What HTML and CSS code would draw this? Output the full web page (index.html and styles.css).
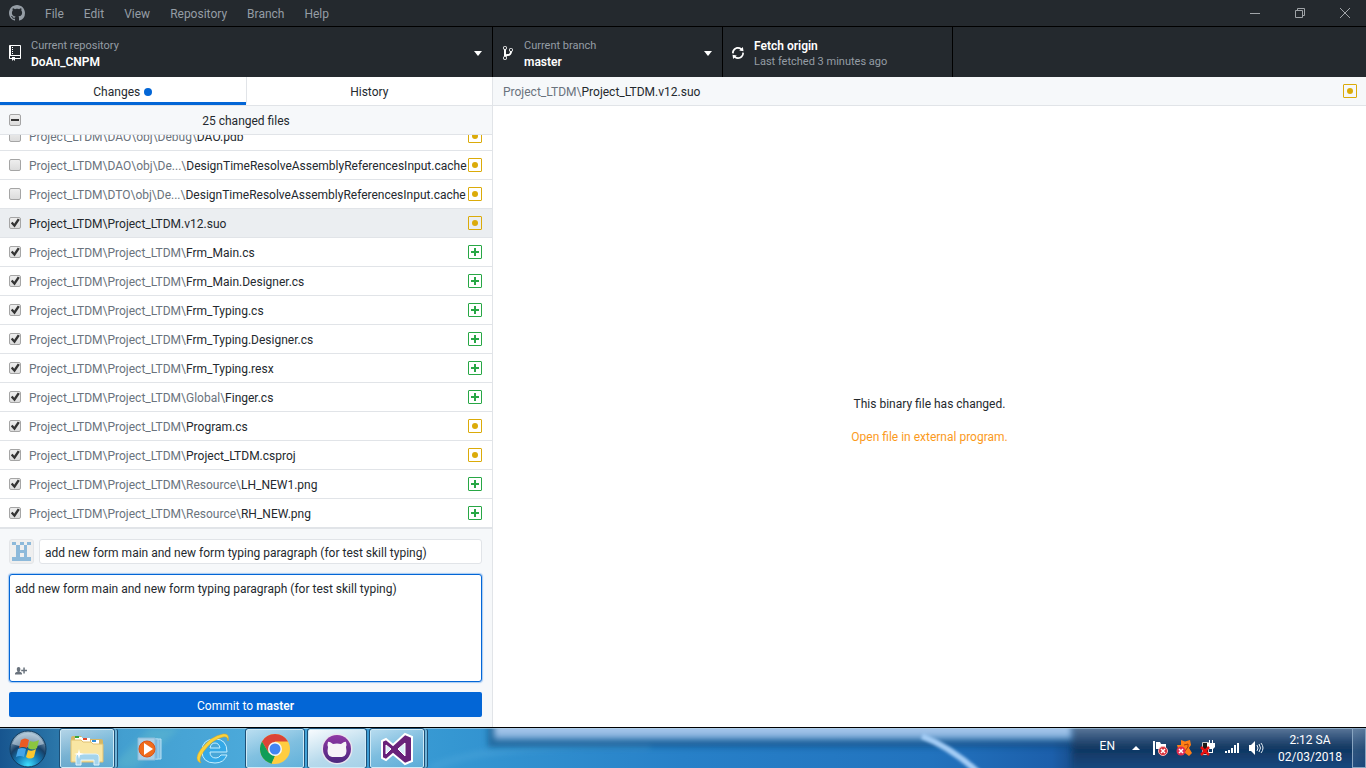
FILE: index.html
```
<!DOCTYPE html>
<html lang="en">
<head>
<meta charset="utf-8">
<title>GitHub Desktop</title>
<link rel="stylesheet" href="styles.css">
</head>
<body>
<svg class="sprite" aria-hidden="true">
  <symbol id="modified" viewBox="0 0 14 14"><rect x=".5" y=".5" width="13" height="13" rx=".5" fill="none" stroke="currentColor"/><circle cx="7" cy="7" r="3" fill="currentColor"/></symbol>
  <symbol id="added" viewBox="0 0 14 14"><rect x=".5" y=".5" width="13" height="13" rx=".5" fill="none" stroke="currentColor"/><path d="M3 6h3V3h2v3h3v2H8v3H6V8H3z" fill="currentColor"/></symbol>
</svg>

<div class="desktop">
  <header class="titlebar">
    <svg class="logo" viewBox="0 0 16 16" aria-hidden="true"><path fill="currentColor" d="M8 0C3.58 0 0 3.58 0 8c0 3.54 2.29 6.53 5.47 7.59.4.07.55-.17.55-.38 0-.19-.01-.82-.01-1.49-2.01.37-2.53-.49-2.69-.94-.09-.23-.48-.94-.82-1.13-.28-.15-.68-.52-.01-.53.63-.01 1.08.58 1.23.82.72 1.21 1.87.87 2.33.66.07-.52.28-.87.51-1.07-1.78-.2-3.64-.89-3.64-3.95 0-.87.31-1.59.82-2.15-.08-.2-.36-1.02.08-2.12 0 0 .67-.21 2.2.82.64-.18 1.32-.27 2-.27.68 0 1.36.09 2 .27 1.53-1.04 2.2-.82 2.2-.82.44 1.1.16 1.92.08 2.12.51.56.82 1.27.82 2.15 0 3.07-1.87 3.75-3.65 3.95.29.25.54.73.54 1.48 0 1.07-.01 1.93-.01 2.2 0 .21.15.46.55.38A8.013 8.013 0 0 0 16 8c0-4.42-3.58-8-8-8z"/></svg>
    <nav class="menu">
      <button>File</button><button>Edit</button><button>View</button><button>Repository</button><button>Branch</button><button>Help</button>
    </nav>
    <div class="window-controls">
      <button aria-label="Minimize"><svg viewBox="0 0 10 10"><path d="M0 5.5h10"/></svg></button>
      <button aria-label="Restore"><svg viewBox="0 0 10 10"><path d="M.5 2.5h7v7h-7zM2.5 2.5v-2h7v7h-2"/></svg></button>
      <button aria-label="Close"><svg viewBox="0 0 10 10"><path d="M0 0l10 10M10 0L0 10"/></svg></button>
    </div>
  </header>

  <div class="toolbar">
    <button class="tool tool-repo">
      <svg class="tool-icon" viewBox="0 0 12 16" aria-hidden="true"><path fill="currentColor" d="M4 9H3V8h1v1zm0-3H3v1h1V6zm0-2H3v1h1V4zm0-2H3v1h1V2zm8-1v12c0 .55-.45 1-1 1H6v2l-1.5-1.5L3 16v-2H1c-.55 0-1-.45-1-1V1c0-.55.45-1 1-1h10c.55 0 1 .45 1 1zm-1 10H1v2h2v-1h3v1h5v-2zm0-10H2v9h9V1z"/></svg>
      <span class="tool-text"><span class="tool-sub">Current repository</span><strong>DoAn_CNPM</strong></span>
      <span class="caret"></span>
    </button>
    <button class="tool">
      <svg class="tool-icon" viewBox="0 0 10 16" aria-hidden="true"><path fill="currentColor" d="M10 5c0-1.11-.89-2-2-2a1.993 1.993 0 0 0-1 3.72v.3c-.02.52-.23.98-.63 1.38-.4.4-.86.61-1.38.63-.83.02-1.48.16-2 .45V4.72a1.993 1.993 0 0 0-1-3.72C.88 1 0 1.89 0 3a2 2 0 0 0 1 1.72v6.56c-.59.35-1 .99-1 1.72 0 1.11.89 2 2 2 1.11 0 2-.89 2-2 0-.53-.2-1-.53-1.36.09-.06.48-.41.59-.47.25-.11.56-.17.94-.17 1.05-.05 1.95-.45 2.75-1.25S8.95 7.77 9 6.73h-.02C9.59 6.37 10 5.73 10 5zM2 1.8c.66 0 1.2.55 1.2 1.2 0 .65-.55 1.2-1.2 1.2C1.35 4.2.8 3.65.8 3c0-.65.55-1.2 1.2-1.2zm0 12.41c-.66 0-1.2-.55-1.2-1.2 0-.65.55-1.2 1.2-1.2.65 0 1.2.55 1.2 1.2 0 .65-.55 1.2-1.2 1.2zm6-8c-.66 0-1.2-.55-1.2-1.2 0-.65.55-1.2 1.2-1.2.65 0 1.2.55 1.2 1.2 0 .65-.55 1.2-1.2 1.2z"/></svg>
      <span class="tool-text"><span class="tool-sub">Current branch</span><strong>master</strong></span>
      <span class="caret"></span>
    </button>
    <button class="tool">
      <svg class="tool-icon" viewBox="0 0 12 16" aria-hidden="true"><path fill="currentColor" d="M10.24 7.4a4.15 4.15 0 0 1-1.2 3.6 4.346 4.346 0 0 1-5.41.54L4.8 10.4.5 9.8l.6 4.2 1.31-1.26c2.36 1.74 5.7 1.57 7.84-.54a5.876 5.876 0 0 0 1.74-4.46l-1.75-.34zM2.96 5a4.346 4.346 0 0 1 5.41-.54L7.2 5.6l4.3.6-.6-4.2-1.31 1.26c-2.36-1.74-5.7-1.57-7.85.54C.5 5.03-.06 6.65.01 8.26l1.75.35A4.17 4.17 0 0 1 2.96 5z"/></svg>
      <span class="tool-text"><strong>Fetch origin</strong><span class="tool-sub">Last fetched 3 minutes ago</span></span>
    </button>
  </div>

  <div class="workspace">
    <aside class="sidebar">
      <div class="tabs" role="tablist">
        <button class="tab tab-active" role="tab" aria-selected="true">Changes<span class="dot"></span></button>
        <button class="tab" role="tab" aria-selected="false">History</button>
      </div>
      <div class="list-header">
        <input type="checkbox" class="check check-mixed" id="all"><label for="all">25 changed files</label>
      </div>
      <ul class="files">
        <li class="file"><input type="checkbox" class="check" id="f1"><label for="f1"><span class="dir">Project_LTDM\DAO\obj\Debug\</span>DAO.pdb</label><svg class="status modified"><use href="#modified"/></svg></li>
        <li class="file"><input type="checkbox" class="check" id="f2"><label for="f2"><span class="dir">Project_LTDM\DAO\obj\De...\</span>DesignTimeResolveAssemblyReferencesInput.cache</label><svg class="status modified"><use href="#modified"/></svg></li>
        <li class="file"><input type="checkbox" class="check" id="f3"><label for="f3"><span class="dir">Project_LTDM\DTO\obj\De...\</span>DesignTimeResolveAssemblyReferencesInput.cache</label><svg class="status modified"><use href="#modified"/></svg></li>
        <li class="file file-selected"><input type="checkbox" class="check" id="f4" checked><label for="f4"><span class="dir">Project_LTDM\</span>Project_LTDM.v12.suo</label><svg class="status modified"><use href="#modified"/></svg></li>
        <li class="file"><input type="checkbox" class="check" id="f5" checked><label for="f5"><span class="dir">Project_LTDM\Project_LTDM\</span>Frm_Main.cs</label><svg class="status added"><use href="#added"/></svg></li>
        <li class="file"><input type="checkbox" class="check" id="f6" checked><label for="f6"><span class="dir">Project_LTDM\Project_LTDM\</span>Frm_Main.Designer.cs</label><svg class="status added"><use href="#added"/></svg></li>
        <li class="file"><input type="checkbox" class="check" id="f7" checked><label for="f7"><span class="dir">Project_LTDM\Project_LTDM\</span>Frm_Typing.cs</label><svg class="status added"><use href="#added"/></svg></li>
        <li class="file"><input type="checkbox" class="check" id="f8" checked><label for="f8"><span class="dir">Project_LTDM\Project_LTDM\</span>Frm_Typing.Designer.cs</label><svg class="status added"><use href="#added"/></svg></li>
        <li class="file"><input type="checkbox" class="check" id="f9" checked><label for="f9"><span class="dir">Project_LTDM\Project_LTDM\</span>Frm_Typing.resx</label><svg class="status added"><use href="#added"/></svg></li>
        <li class="file"><input type="checkbox" class="check" id="f10" checked><label for="f10"><span class="dir">Project_LTDM\Project_LTDM\Global\</span>Finger.cs</label><svg class="status added"><use href="#added"/></svg></li>
        <li class="file"><input type="checkbox" class="check" id="f11" checked><label for="f11"><span class="dir">Project_LTDM\Project_LTDM\</span>Program.cs</label><svg class="status modified"><use href="#modified"/></svg></li>
        <li class="file"><input type="checkbox" class="check" id="f12" checked><label for="f12"><span class="dir">Project_LTDM\Project_LTDM\</span>Project_LTDM.csproj</label><svg class="status modified"><use href="#modified"/></svg></li>
        <li class="file"><input type="checkbox" class="check" id="f13" checked><label for="f13"><span class="dir">Project_LTDM\Project_LTDM\Resource\</span>LH_NEW1.png</label><svg class="status added"><use href="#added"/></svg></li>
        <li class="file"><input type="checkbox" class="check" id="f14" checked><label for="f14"><span class="dir">Project_LTDM\Project_LTDM\Resource\</span>RH_NEW.png</label><svg class="status added"><use href="#added"/></svg></li>
      </ul>
      <form class="commit">
        <div class="summary-row">
          <svg class="avatar" viewBox="0 0 25 25" aria-hidden="true"><rect x=".5" y=".5" width="24" height="24" rx="2.5" fill="#efefef" stroke="#e3e5e8"/><path fill="#8db9da" fill-rule="evenodd" d="M3 3h4v3H3zM11 3h4v3h-4zM18 3h4v3h-4zM7 6h4v5h4V6h3v12h4v4H3v-4h4zM11 14v4h4v-4z"/></svg>
          <input class="summary" type="text" aria-label="Summary" value="add new form main and new form typing paragraph (for test skill typing)">
        </div>
        <div class="description">
          <textarea aria-label="Description">add new form main and new form typing paragraph (for test skill typing)</textarea>
          <button type="button" class="coauthor" aria-label="Add co-authors"><svg viewBox="0 0 12 8"><path fill="currentColor" d="M1.800 2.200C1.800 .8 2.500 0 3.600 0s1.800.8 1.800 2.200c0 .9-.3 1.600-.8 2v.6C6 5.200 7 5.600 7 6.600V7.500H0v-.9c0-1 1-1.400 2.500-1.800v-.6c-.5-.4-.7-1.100-.7-2zM8.300.6h1.500v2.100H12v1.500H9.800v2.300H8.300V4.200H6.200V2.700h2.100z"/></svg></button>
        </div>
        <button type="button" class="commit-button">Commit to <strong>master</strong></button>
      </form>
    </aside>

    <main class="diff">
      <div class="diff-header"><span class="path"><span class="dir">Project_LTDM\</span>Project_LTDM.v12.suo</span><svg class="status modified"><use href="#modified"/></svg></div>
      <div class="binary">
        <p>This binary file has changed.</p>
        <p><a href="#open">Open file in external program.</a></p>
      </div>
    </main>
  </div>

  <footer class="taskbar">
    <svg class="glass" viewBox="0 0 1366 40" preserveAspectRatio="none" aria-hidden="true">
      <defs>
        <linearGradient id="base"><stop offset="0" stop-color="#17558f"/><stop offset=".04" stop-color="#2a75a8"/><stop offset=".09" stop-color="#439fd0"/><stop offset=".18" stop-color="#4ba9da"/><stop offset=".33" stop-color="#3597d2"/><stop offset=".5" stop-color="#2780c8"/><stop offset=".68" stop-color="#2273be"/><stop offset=".77" stop-color="#1c5fab"/><stop offset=".79" stop-color="#174b86"/><stop offset="1" stop-color="#174775"/></linearGradient>
        <linearGradient id="dark" x2="0" y2="1"><stop offset="0" stop-color="#718ba8"/><stop offset=".25" stop-color="#3d5e85"/><stop offset=".5" stop-color="#0f355f"/><stop offset=".7" stop-color="#143f70"/><stop offset="1" stop-color="#1c5088"/></linearGradient>
        <linearGradient id="glow" x2="0" y2="1"><stop offset="0" stop-color="#a9c8ec"/><stop offset=".65" stop-color="#9fc2e8"/><stop offset="1" stop-color="#5b97cc"/></linearGradient>
        <filter id="soft" x="-5%" y="-80%" width="110%" height="260%"><feGaussianBlur stdDeviation="3"/></filter>
        <filter id="thin" x="-20%" y="-20%" width="140%" height="140%"><feGaussianBlur stdDeviation="1.500"/></filter>
      </defs>
      <rect width="1366" height="40" fill="url(#base)"/>
      <path d="M430 40q60-26 220-22" stroke="#62b4e2" stroke-width="5" fill="none" opacity=".35" filter="url(#soft)"/>
      <path d="M110 40L150 0h30l-45 40z" fill="#7bd0c9" opacity=".25" filter="url(#soft)"/>
      <rect x="488" y="-10" width="620" height="29" fill="#0f4271" opacity=".55" filter="url(#soft)"/>
      <rect x="1072" y="-6" width="304" height="52" fill="url(#dark)" filter="url(#soft)"/>
      <rect x="494" y="-8" width="578" height="20" fill="url(#glow)" filter="url(#soft)"/>
      <path d="M922 8q30 12 58 38" stroke="#a4cdf6" stroke-width="6" fill="none" filter="url(#thin)"/>
      <path d="M0 .5h1366" stroke="#b6d5ea" opacity=".6"/>
    </svg>
    <button class="task start" aria-label="Start"><svg viewBox="0 0 40 40">
      <defs><radialGradient id="orb" cx=".5" cy=".95" r=".95"><stop offset="0" stop-color="#3fe0ff"/><stop offset=".35" stop-color="#1579b5"/><stop offset=".6" stop-color="#173f66"/><stop offset="1" stop-color="#a9c4d6"/></radialGradient></defs>
      <circle cx="20" cy="20" r="18" fill="url(#orb)" stroke="#123a5c"/><path d="M4 15a17 17 0 0 1 32 0q-16 6-32 0z" fill="#d9e8f1" opacity=".5"/>
      <path d="M13 11q4-3 8 0l-2 8q-4-2-8 0z" fill="#ea5a24"/><path d="M22 12q4 2 9-1l-2 8q-4 3-9 0z" fill="#8cc63e"/><path d="M10 20q4-2 8 0l-2 8q-4-2-8 0z" fill="#45a5e8"/><path d="M20 21q4 2 8-1l-2 8q-4 3-8 0z" fill="#fdc82f"/>
    </svg></button>
    <button class="task task-open task-stack" aria-label="File Explorer"><svg viewBox="0 0 34 34">
      <path d="M1 6q0-2 2-2h8l2 3h18q2 0 2 2v20H1z" fill="#d6b764"/><path d="M5 5h7v5H5zM12 6h8v5h-8zM21 8h8v5h-8z" fill="#fff"/><path d="M5 4h4v2H5z" fill="#36a43a"/><path d="M13 6h4v2h-4z" fill="#e24a2c"/><path d="M22 8h4v2h-4z" fill="#338fd6"/><path d="M1 8h10l2 2h8l2 2h10v18H1z" fill="#f9e6a3" stroke="#e0c071"/><path d="M6 33v-8q0-3 3-3h17q3 0 3 3v8h-5v-5H11v5z" fill="#a4d4ec" stroke="#dff3fc"/><path d="M9 17l1 4 4 1-4 1-1 4-1-4-4-1 4-1z" fill="#fff"/>
    </svg></button>
    <button class="task" aria-label="Media Player"><svg viewBox="0 0 34 34"><path d="M13 7h14v20H13z" fill="#84bfe2" stroke="#b9e0f3"/><path d="M10 7h14v20H10z" fill="#79b8df" stroke="#a6d5ee"/><path d="M4 6h17v22H4z" fill="#a9cfe7" stroke="#8abbd9"/><circle cx="13" cy="17" r="8" fill="#f06c1b" stroke="#d9541a"/><path d="M10 11v12l9-6z" fill="#fff"/></svg></button>
    <button class="task" aria-label="Internet Explorer"><svg viewBox="0 0 34 34"><path fill-rule="evenodd" d="M31 20H14q0 6 6 6 3 0 5-3h6q-3 8-12 8Q6 31 6 19 6 7 19 7q12 0 12 13zM14 16h10q-1-5-5-5-4 0-5 5z" fill="#35a9e7" stroke="#c6efff"/><path d="M5 31q-8-3 0-14Q15 4 27 2q7-1 5 7 0-5-5-4Q17 7 8 19q-6 8-3 12z" fill="#fbd33b" stroke="#dfa51d" stroke-width=".5"/></svg></button>
    <button class="task task-open" aria-label="Chrome"><svg viewBox="0 0 34 34"><circle cx="17" cy="17" r="15" fill="#ffcd40"/><path d="M4 9.500A15 15 0 0 1 30 9.500H17L10.500 20.500z" fill="#db4437"/><path d="M4 9.500l6.500 11L17 24l-3 7.700A15 15 0 0 1 4 9.500z" fill="#0f9d58"/><path d="M17 24l-3.500 7.600 3.500.4 6.500-11z" fill="#ffcd40"/><circle cx="17" cy="17" r="7" fill="#f5f7f8"/><circle cx="17" cy="17" r="5.500" fill="#4285f4"/></svg></button>
    <button class="task task-open task-current" aria-label="GitHub Desktop"><svg viewBox="0 0 34 34"><defs><linearGradient id="purple" x2="0" y2="1"><stop offset="0" stop-color="#9038a5"/><stop offset="1" stop-color="#4c287e"/></linearGradient></defs><circle cx="17" cy="17" r="15.500" fill="#e9e4ef"/><circle cx="17" cy="17" r="14" fill="url(#purple)"/><path d="M8 10q1-1 5 2 4-1 8 0 4-3 5-2 1 3 0 5 2 9-4 10H12q-6-1-4-10-1-2 0-5z" fill="#f6f4f8"/></svg></button>
    <button class="task task-open task-stack" aria-label="Visual Studio"><svg viewBox="0 0 34 34"><path d="M2 9l4-2 7 6L25 2l7 3v24l-7 3L13 22l-7 6-4-2z" fill="#68217a" stroke="#fff" stroke-width="2"/><path d="M6 13v9l5-5zM25 11l-7 6 7 7z" fill="#d9eefa" stroke="#fff"/></svg></button>

    <div class="tray">
      <span class="language">EN</span>
      <button aria-label="Show hidden icons"><svg viewBox="0 0 16 16"><path d="M4 10l4-4 4 4z" fill="#fff"/></svg></button>
      <button aria-label="Action Center"><svg viewBox="0 0 16 16"><path d="M1 1h2v14H1z" fill="#fff"/><path d="M4 2h4l1 2h5v6H8L7 9H4z" fill="#fff"/><circle cx="11" cy="11" r="4.500" fill="#d8303a" stroke="#fbb"/><path d="M9 9l4 4m0-4l-4 4" stroke="#fff" stroke-width="1.500"/></svg></button>
      <button aria-label="Antivirus"><svg viewBox="0 0 16 16"><path d="M5 0l4 1.500L14 0l1 5-2 3 3 5-3 3-4-3-6-1L1 5h4z" fill="#ff7f16"/><path d="M8 5l4-1v3l-3 4" fill="none" stroke="#a83b08"/><circle cx="5" cy="11" r="4.500" fill="#e02c50"/><path d="M3 9l4 4m0-4l-4 4" stroke="#fff" stroke-width="1.500"/></svg></button>
      <button aria-label="Power"><svg viewBox="0 0 16 16"><path d="M2.500 2.500h6v12h-6z" fill="#191919" stroke="#c8c8c8"/><path d="M9 0h1v3h2V0h1v3h2v4l-2 2v4H8v-1h4V9H9L7 7V3h2z" fill="#fff"/><path d="M1 7l8 8m0-8l-8 8" stroke="#ec1111" stroke-width="2.500"/></svg></button>
      <button aria-label="Network"><svg viewBox="0 0 16 16"><path d="M1 11h2v2H1zM4 10h2v3H4zM7 8h2v5H7zM10 5h2v8h-2zM13 3h2v10h-2z" fill="#fff"/></svg></button>
      <button aria-label="Volume"><svg viewBox="0 0 16 16"><path d="M1 5h2l4-4v14l-4-4H1z" fill="#fff"/><path d="M9 5q2 3 0 6M11 4q3 4 0 8M13 3q4 5 0 10" fill="none" stroke="#e6eef6"/></svg></button>
      <div class="clock"><time>2:12 SA</time><span>02/03/2018</span></div>
      <button class="show-desktop" aria-label="Show desktop"></button>
    </div>
  </footer>
</div>
</body>
</html>
```
FILE: styles.css
```
:root {
  --dark: #24292e;
  --line: #e1e4e8;
  --panel: #f6f8fa;
  --muted: #6a737d;
  --blue: #0366d6;
}
* { box-sizing: border-box; }
body {
  margin: 0;
  font: 12px/16px Roboto, "Open Sans", sans-serif;
  color: var(--dark);
  background: #fff;
}
button { margin: 0; padding: 0; border: 0; background: none; color: inherit; font: inherit; }
input, textarea { font: inherit; color: inherit; }
strong { font-weight: 600; }
p { margin: 0; }
.sprite { display: none; }

.desktop { display: flex; flex-direction: column; height: 100vh; min-height: 480px; overflow: hidden; }

.titlebar { display: flex; align-items: center; flex: none; height: 27px; padding-left: 9px; background: var(--dark); border-bottom: 1px solid #000; color: #959da5; }
.logo { width: 16px; height: 16px; }
.menu { display: flex; gap: 20px; padding: 1px 0 0 20px; }
.window-controls { display: flex; align-self: stretch; margin-left: auto; }
.window-controls button { display: flex; align-items: center; width: 45px; padding-left: 19px; }
.window-controls svg { width: 10px; height: 10px; fill: none; stroke: #a0a4a8; }

.toolbar { display: flex; flex: none; height: 50px; background: var(--dark); color: #fff; }
.tool { display: flex; align-items: center; width: 230px; padding: 2px 10px 0 8px; border-right: 1px solid #000; text-align: left; }
.tool-repo { width: 493px; }
.tool-icon { width: 14px; height: 16px; margin-right: 9px; }
.tool-text { display: flex; flex-direction: column; flex: 1; padding-top: 1px; }
.tool-sub { color: #959da5; font-size: 11px; }
.caret { border: 4px solid transparent; border-top: 5px solid #fff; border-bottom: 0; }

.workspace { display: flex; flex: 1; min-height: 0; }
.sidebar { display: flex; flex-direction: column; flex: 0 1 493px; min-width: 0; border-right: 1px solid var(--line); }
.tabs { display: flex; flex: none; height: 29px; border-bottom: 1px solid var(--line); }
.tab { display: flex; flex: 1; align-items: center; justify-content: center; gap: 4px; border-bottom: 3px solid transparent; padding-top: 4px; }
.tab-active { border-bottom-color: var(--blue); }
.tab + .tab { border-left: 1px solid var(--line); }
.dot { width: 8px; height: 8px; border-radius: 50%; background: var(--blue); }

.list-header { display: flex; align-items: center; flex: none; height: 29px; padding: 0 9px; background: var(--panel); border-bottom: 1px solid var(--line); }
.list-header label { flex: 1; text-align: center; padding: 2px 12px 0 0; }

.check { appearance: none; display: grid; place-items: center; flex: none; width: 12px; height: 12px; margin: 0; border: 1px solid #a5a5a5; border-radius: 2px; background: linear-gradient(#eee, #dcdcdc); }
.check:checked::before { content: ""; width: 10px; height: 10px; background: #333; clip-path: polygon(8% 52%, 26% 38%, 42% 58%, 78% 4%, 98% 18%, 46% 94%); }
.check-mixed::before { content: ""; width: 8px; height: 2px; background: #333; }

.files { display: flex; flex-direction: column; justify-content: flex-end; flex: 1; min-height: 0; margin: 0; padding: 0; overflow: hidden; list-style: none; }
.file { display: flex; align-items: center; flex: none; height: 29px; padding: 0 10px 0 9px; border-bottom: 1px solid var(--line); }
.file label { flex: 1; min-width: 0; padding: 2px 0 0 8px; white-space: nowrap; }
.file-selected { background: #ebeef1; }
.dir { color: var(--muted); }
.file-selected .dir { color: inherit; }
.status { flex: none; width: 14px; height: 14px; }
.modified { color: #dbab09; }
.added { color: #28a745; }

.commit { display: flex; flex-direction: column; flex: none; gap: 10px; padding: 10px 10px 10px 9px; background: var(--panel); border-top: 1px solid var(--line); }
.summary-row { display: flex; gap: 5px; }
.avatar { width: 25px; height: 25px; }
.summary { flex: 1; min-width: 0; height: 25px; padding: 2px 5px 0; border: 1px solid var(--line); border-radius: 3px; background: #fff; }
.description { display: flex; flex-direction: column; height: 108px; padding: 6px 5px; border: 1px solid var(--blue); border-radius: 3px; background: #fff; box-shadow: 0 0 1px 1px #a8cbf2; }
.description textarea { flex: 1; padding: 0; border: 0; outline: 0; resize: none; background: none; }
.coauthor { display: flex; align-self: flex-start; color: var(--muted); }
.coauthor svg { width: 12px; height: 8px; }
.commit-button { height: 25px; padding-top: 2px; border-radius: 2px; background: var(--blue); color: #fff; }

.diff { display: flex; flex-direction: column; flex: 1; min-width: 0; }
.diff-header { display: flex; align-items: center; justify-content: space-between; flex: none; height: 29px; padding: 0 9px 0 10px; background: var(--panel); border-bottom: 1px solid var(--line); }
.path { padding-top: 2px; }
.binary { display: flex; flex-direction: column; align-items: center; justify-content: center; flex: 1; gap: 17px; padding-top: 8px; }
.binary a { color: #fb9a1c; text-decoration: none; }

.taskbar { position: relative; display: flex; flex: none; gap: 4px; height: 41px; border-top: 1px solid #000; background: #174b86; color: #fff; }
.glass { position: absolute; inset: 0; width: 100%; height: 100%; }
.task { position: relative; display: grid; place-items: center; flex: none; width: 58px; height: 39px; margin-top: 1px; border-radius: 2px; }
.task svg { width: 34px; height: 34px; }
.start { width: 56px; }
.start svg { width: 40px; height: 40px; }
.task-open { border: 1px solid #cfeaf6; outline: 1px solid #1d5077; outline-offset: 0; background: linear-gradient(160deg, #d5ebf6cc, #9dcde4aa 50%, #7bbddd88); }
.task-current { background: linear-gradient(160deg, #f7fbfe, #b7daec 60%, #a6d1e8); }
.task-stack { width: 54px; margin-right: 4px; box-shadow: 3px 0 0 #6fb4d8, 4px 0 0 #1d5077; }

.tray { position: relative; display: flex; align-items: center; gap: 8px; margin-left: auto; }
.tray button { display: flex; }
.tray svg { width: 16px; height: 16px; }
.language { padding: 0 5px 4px 0; }
.clock { display: flex; flex-direction: column; align-items: center; width: 76px; padding-top: 2px; line-height: 17px; }
.tray .show-desktop { align-self: stretch; width: 14px; margin-left: -4px; border: 1px solid #88a5c1; background: linear-gradient(135deg, #6e8cab88, #1b477888); }
```
